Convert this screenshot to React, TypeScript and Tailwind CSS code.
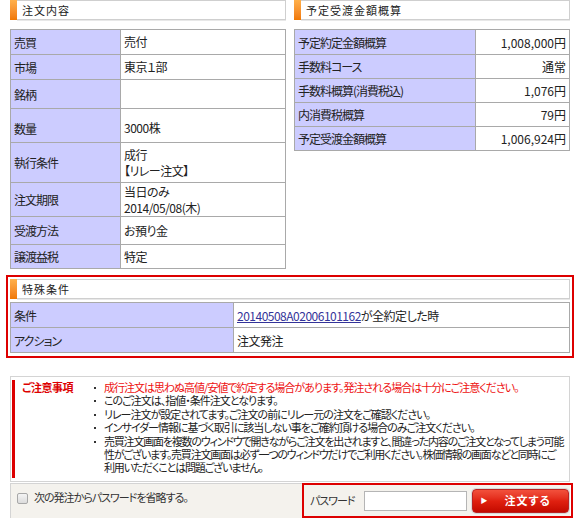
import React from 'react';

const font = { fontFamily: '"Noto Sans CJK JP", "Noto Sans", sans-serif' };

function SectionHeader({ title }: { title: string }) {
  return (
    <div className="flex h-[20px]">
      <div className="w-[7px] bg-gradient-to-b from-[#ffb04a] to-[#f07800]" />
      <div className="flex flex-1 items-center border border-l-0 border-[#cfcfcf] bg-white pl-[5px] text-[11px] tracking-[1px] text-[#222] shadow-[0_1px_0_#e8e8e8]">
        {title}
      </div>
    </div>
  );
}

type Row = { label: string; value: React.ReactNode; h: number; pad?: boolean };

const orderRows: Row[] = [
  { label: '売買', value: '売付', h: 25 },
  { label: '市場', value: '東京１部', h: 25 },
  { label: '銘柄', value: '', h: 29 },
  { label: '数量', value: '3000株', h: 34, pad: true },
  { label: '執行条件', value: <>成行<br />【リレー注文】</>, h: 40 },
  { label: '注文期限', value: <>当日のみ<br />2014/05/08(木)</>, h: 34 },
  { label: '受渡方法', value: 'お預り金', h: 28 },
  { label: '譲渡益税', value: '特定', h: 24 },
];

const amountRows: Row[] = [
  { label: '予定約定金額概算', value: '1,008,000円', h: 25 },
  { label: '手数料コース', value: '通常', h: 24 },
  { label: '手数料概算(消費税込)', value: '1,076円', h: 24 },
  { label: '内消費税概算', value: '79円', h: 24 },
  { label: '予定受渡金額概算', value: '1,006,924円', h: 24 },
];

const notes = [
  '売買注文画面を複数のウィンドウで開きながらご注文を出されますと、間違った内容のご注文となってしまう可能',
  '性がございます。売買注文画面は必ず一つのウィンドウだけでご利用ください。株価情報の画面などと同時にご',
  '利用いただくことは問題ございません。',
];

function Bullet() {
  return (
    <span className="flex w-[10px] shrink-0 pt-[6px]">
      <span className="h-[2px] w-[2px] bg-[#333]" />
    </span>
  );
}

export default function App() {
  return (
    <div className="h-[518px] w-[580px] overflow-hidden bg-white text-[12px] leading-[15px] text-[#222] [font-feature-settings:'palt']" style={font}>
      <div className="flex gap-[8px] pl-[10px]">
        <div className="w-[276px]">
          <SectionHeader title="注文内容" />
          <table className="mt-[9px] w-full border-collapse">
            <tbody>
              {orderRows.map((r) => (
                <tr key={r.label} style={{ height: r.h }}>
                  <td className={`w-[110px] border border-[#a9a9a9] bg-[#ccccff] pl-[3px] align-middle tracking-[-1px] ${r.pad ? 'pt-[5px]' : ''}`}>{r.label}</td>
                  <td className={`border border-[#a9a9a9] bg-white pl-[3px] align-middle leading-[16px] tracking-[-0.5px] ${r.pad ? 'pt-[5px]' : ''}`}>{r.value}</td>
                </tr>
              ))}
            </tbody>
          </table>
        </div>
        <div className="w-[276px]">
          <SectionHeader title="予定受渡金額概算" />
          <table className="mt-[9px] w-full border-collapse">
            <tbody>
              {amountRows.map((r) => (
                <tr key={r.label} style={{ height: r.h }}>
                  <td className="w-[181px] border border-[#a9a9a9] bg-[#ccccff] pl-[3px] tracking-[-1px]">{r.label}</td>
                  <td className="border border-[#a9a9a9] bg-white pr-[3px] text-right">{r.value}</td>
                </tr>
              ))}
            </tbody>
          </table>
        </div>
      </div>

      <div className="mx-[6px] mt-[6px] h-[83px] border-2 border-[#dd0000] px-[2px] pt-[2px]">
        <SectionHeader title="特殊条件" />
        <table className="mt-[3px] w-full border-collapse">
          <tbody>
            <tr className="h-[25px]">
              <td className="w-[223px] border border-[#a9a9a9] bg-[#ccccff] pl-[3px] tracking-[-1px]">条件</td>
              <td className="border border-[#a9a9a9] pl-[3px] tracking-[-0.5px]">
                <span className="text-[#333399] underline">20140508A02006101162</span>が全約定した時
              </td>
            </tr>
            <tr className="h-[25px]">
              <td className="border border-[#a9a9a9] bg-[#ccccff] pl-[3px] tracking-[-1px]">アクション</td>
              <td className="border border-[#a9a9a9] pl-[3px] tracking-[-0.5px]">注文発注</td>
            </tr>
          </tbody>
        </table>
      </div>

      <div className="mx-[10px] mt-[18px] h-[106px] border border-[#d4d4d4] bg-white py-[3px] pl-[1px]">
        <div className="flex h-[98px] border-l-[3px] border-[#dd0000] pt-[1px] text-[11px] leading-[13.4px] tracking-[-1px]">
          <div className="w-[79px] shrink-0 pl-[7px] font-bold tracking-[-0.5px] text-[#dd0000]">ご注意事項</div>
          <ul className="whitespace-nowrap">
            <li className="flex text-[#ee1111]"><Bullet />成行注文は思わぬ高値/安値で約定する場合があります。発注される場合は十分にご注意ください。</li>
            <li className="flex"><Bullet />このご注文は、指値・条件注文となります。</li>
            <li className="flex"><Bullet />リレー注文が設定されてます。ご注文の前にリレー元の注文をご確認ください。</li>
            <li className="flex"><Bullet />インサイダー情報に基づく取引に該当しない事をご確約頂ける場合のみご注文ください。</li>
            <li className="flex">
              <Bullet />
              <span className="tracking-[-1.2px]">{notes[0]}<br />{notes[1]}<br />{notes[2]}</span>
            </li>
          </ul>
        </div>
      </div>

      <div className="mx-[10px] mt-[1px] flex h-[35px] items-start border-t border-l border-[#d4d4d4] bg-[#f4f2ed]">
        <span className="ml-[6px] mt-[9px] h-[11px] w-[11px] shrink-0 rounded-[2px] border border-[#a8a8a8] bg-gradient-to-b from-[#f4f4f4] to-[#dcdcdc]" />
        <span className="ml-[6px] mt-[6px] whitespace-nowrap text-[11px] tracking-[-1px] text-[#333]">次の発注からパスワードを省略する。</span>
        <div className="ml-auto mr-[-3px] mt-[-1px] flex h-[35px] w-[271px] shrink-0 items-center border-2 border-[#dd0000] pl-[6px]">
          <span className="shrink-0 whitespace-nowrap text-[11px] tracking-[-1px] text-[#333]">パスワード</span>
          <input type="password" className="ml-[9px] h-[20px] w-[103px] shrink-0 border border-[#b5b5b5] bg-white" />
          <button className="ml-[5px] flex h-[24px] w-[97px] shrink-0 items-center rounded-[4px] border border-[#b22] bg-gradient-to-b from-[#f2503c] via-[#e02010] to-[#c40800] text-[11px] font-bold text-white shadow-[0_0_0_1px_#d8d8d8]">
            <span className="ml-[8px] text-[7px]">▶</span>
            <span className="ml-[17px] whitespace-nowrap tracking-[1px]">注文する</span>
          </button>
        </div>
      </div>
    </div>
  );
}
